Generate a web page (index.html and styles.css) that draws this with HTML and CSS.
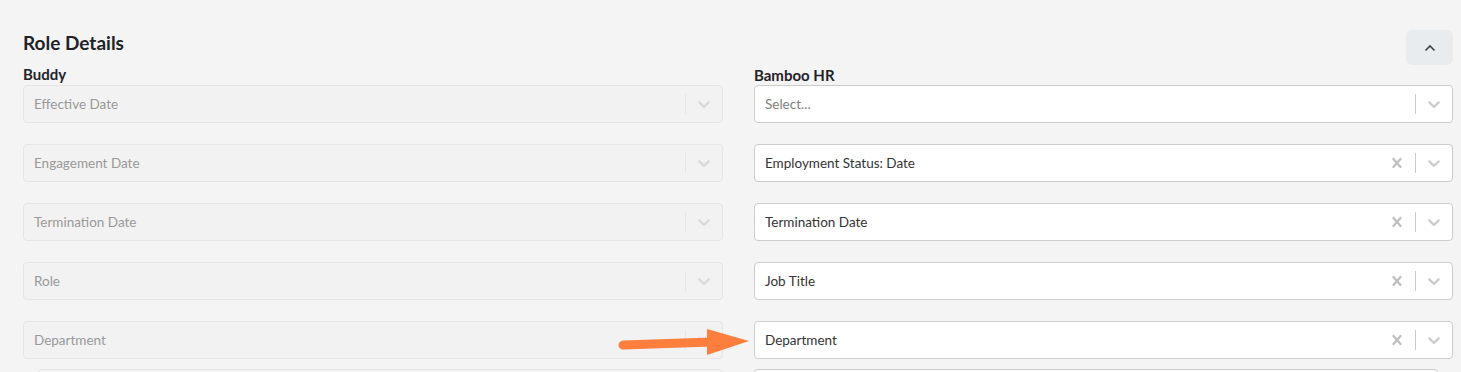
FILE: index.html
```html
<!DOCTYPE html>
<html lang="en">
<head>
  <meta charset="UTF-8">
  <title>Role Details</title>
  <meta name="viewport" content="width=device-width, initial-scale=1.0">
  <link rel="stylesheet" href="styles.css">
</head>
<body>
  <section class="panel">
    <div class="panel-head">
      <h2>Role Details</h2>
      <button class="collapse" aria-label="Collapse">
        <svg width="12" height="8" viewBox="0 0 12 8"><polyline points="1.5,6.5 6,2 10.5,6.5" fill="none" stroke="#3d4246" stroke-width="1.6"/></svg>
      </button>
    </div>

    <div class="grid">
      <div class="col-label">Buddy</div>
      <div class="col-label">Bamboo HR</div>

      <div class="select disabled"><span class="value">Effective Date</span><span class="sep"></span><span class="ind"><svg viewBox="0 0 20 20"><path d="M4.516 7.548c0.436-0.446 1.043-0.481 1.576 0l3.908 3.747 3.908-3.747c0.533-0.481 1.141-0.446 1.574 0 0.436 0.445 0.408 1.197 0 1.615-0.406 0.418-4.695 4.502-4.695 4.502-0.217 0.223-0.502 0.335-0.787 0.335s-0.57-0.112-0.789-0.335c0 0-4.287-4.084-4.695-4.502s-0.436-1.17 0-1.615z"/></svg></span></div>
      <div class="select"><span class="value placeholder">Select...</span><span class="sep"></span><span class="ind"><svg viewBox="0 0 20 20"><path d="M4.516 7.548c0.436-0.446 1.043-0.481 1.576 0l3.908 3.747 3.908-3.747c0.533-0.481 1.141-0.446 1.574 0 0.436 0.445 0.408 1.197 0 1.615-0.406 0.418-4.695 4.502-4.695 4.502-0.217 0.223-0.502 0.335-0.787 0.335s-0.57-0.112-0.789-0.335c0 0-4.287-4.084-4.695-4.502s-0.436-1.17 0-1.615z"/></svg></span></div>

      <div class="select disabled"><span class="value">Engagement Date</span><span class="sep"></span><span class="ind"><svg viewBox="0 0 20 20"><path d="M4.516 7.548c0.436-0.446 1.043-0.481 1.576 0l3.908 3.747 3.908-3.747c0.533-0.481 1.141-0.446 1.574 0 0.436 0.445 0.408 1.197 0 1.615-0.406 0.418-4.695 4.502-4.695 4.502-0.217 0.223-0.502 0.335-0.787 0.335s-0.57-0.112-0.789-0.335c0 0-4.287-4.084-4.695-4.502s-0.436-1.17 0-1.615z"/></svg></span></div>
      <div class="select"><span class="value">Employment Status: Date</span><span class="ind clear"><svg viewBox="0 0 20 20"><path d="M14.348 14.849c-0.469 0.469-1.229 0.469-1.697 0l-2.651-3.030-2.651 3.029c-0.469 0.469-1.229 0.469-1.697 0-0.469-0.469-0.469-1.229 0-1.697l2.758-3.15-2.759-3.152c-0.469-0.469-0.469-1.228 0-1.697s1.228-0.469 1.697 0l2.652 3.031 2.651-3.031c0.469-0.469 1.228-0.469 1.697 0s0.469 1.229 0 1.697l-2.758 3.152 2.758 3.15c0.469 0.469 0.469 1.229 0 1.698z"/></svg></span><span class="sep"></span><span class="ind"><svg viewBox="0 0 20 20"><path d="M4.516 7.548c0.436-0.446 1.043-0.481 1.576 0l3.908 3.747 3.908-3.747c0.533-0.481 1.141-0.446 1.574 0 0.436 0.445 0.408 1.197 0 1.615-0.406 0.418-4.695 4.502-4.695 4.502-0.217 0.223-0.502 0.335-0.787 0.335s-0.57-0.112-0.789-0.335c0 0-4.287-4.084-4.695-4.502s-0.436-1.17 0-1.615z"/></svg></span></div>

      <div class="select disabled"><span class="value">Termination Date</span><span class="sep"></span><span class="ind"><svg viewBox="0 0 20 20"><path d="M4.516 7.548c0.436-0.446 1.043-0.481 1.576 0l3.908 3.747 3.908-3.747c0.533-0.481 1.141-0.446 1.574 0 0.436 0.445 0.408 1.197 0 1.615-0.406 0.418-4.695 4.502-4.695 4.502-0.217 0.223-0.502 0.335-0.787 0.335s-0.57-0.112-0.789-0.335c0 0-4.287-4.084-4.695-4.502s-0.436-1.17 0-1.615z"/></svg></span></div>
      <div class="select"><span class="value">Termination Date</span><span class="ind clear"><svg viewBox="0 0 20 20"><path d="M14.348 14.849c-0.469 0.469-1.229 0.469-1.697 0l-2.651-3.030-2.651 3.029c-0.469 0.469-1.229 0.469-1.697 0-0.469-0.469-0.469-1.229 0-1.697l2.758-3.15-2.759-3.152c-0.469-0.469-0.469-1.228 0-1.697s1.228-0.469 1.697 0l2.652 3.031 2.651-3.031c0.469-0.469 1.228-0.469 1.697 0s0.469 1.229 0 1.697l-2.758 3.152 2.758 3.15c0.469 0.469 0.469 1.229 0 1.698z"/></svg></span><span class="sep"></span><span class="ind"><svg viewBox="0 0 20 20"><path d="M4.516 7.548c0.436-0.446 1.043-0.481 1.576 0l3.908 3.747 3.908-3.747c0.533-0.481 1.141-0.446 1.574 0 0.436 0.445 0.408 1.197 0 1.615-0.406 0.418-4.695 4.502-4.695 4.502-0.217 0.223-0.502 0.335-0.787 0.335s-0.57-0.112-0.789-0.335c0 0-4.287-4.084-4.695-4.502s-0.436-1.17 0-1.615z"/></svg></span></div>

      <div class="select disabled"><span class="value">Role</span><span class="sep"></span><span class="ind"><svg viewBox="0 0 20 20"><path d="M4.516 7.548c0.436-0.446 1.043-0.481 1.576 0l3.908 3.747 3.908-3.747c0.533-0.481 1.141-0.446 1.574 0 0.436 0.445 0.408 1.197 0 1.615-0.406 0.418-4.695 4.502-4.695 4.502-0.217 0.223-0.502 0.335-0.787 0.335s-0.57-0.112-0.789-0.335c0 0-4.287-4.084-4.695-4.502s-0.436-1.17 0-1.615z"/></svg></span></div>
      <div class="select"><span class="value">Job Title</span><span class="ind clear"><svg viewBox="0 0 20 20"><path d="M14.348 14.849c-0.469 0.469-1.229 0.469-1.697 0l-2.651-3.030-2.651 3.029c-0.469 0.469-1.229 0.469-1.697 0-0.469-0.469-0.469-1.229 0-1.697l2.758-3.15-2.759-3.152c-0.469-0.469-0.469-1.228 0-1.697s1.228-0.469 1.697 0l2.652 3.031 2.651-3.031c0.469-0.469 1.228-0.469 1.697 0s0.469 1.229 0 1.697l-2.758 3.152 2.758 3.15c0.469 0.469 0.469 1.229 0 1.698z"/></svg></span><span class="sep"></span><span class="ind"><svg viewBox="0 0 20 20"><path d="M4.516 7.548c0.436-0.446 1.043-0.481 1.576 0l3.908 3.747 3.908-3.747c0.533-0.481 1.141-0.446 1.574 0 0.436 0.445 0.408 1.197 0 1.615-0.406 0.418-4.695 4.502-4.695 4.502-0.217 0.223-0.502 0.335-0.787 0.335s-0.57-0.112-0.789-0.335c0 0-4.287-4.084-4.695-4.502s-0.436-1.17 0-1.615z"/></svg></span></div>

      <div class="select disabled"><span class="value">Department</span><span class="sep"></span><span class="ind"><svg viewBox="0 0 20 20"><path d="M4.516 7.548c0.436-0.446 1.043-0.481 1.576 0l3.908 3.747 3.908-3.747c0.533-0.481 1.141-0.446 1.574 0 0.436 0.445 0.408 1.197 0 1.615-0.406 0.418-4.695 4.502-4.695 4.502-0.217 0.223-0.502 0.335-0.787 0.335s-0.57-0.112-0.789-0.335c0 0-4.287-4.084-4.695-4.502s-0.436-1.17 0-1.615z"/></svg></span></div>
      <div class="select"><span class="value">Department</span><span class="ind clear"><svg viewBox="0 0 20 20"><path d="M14.348 14.849c-0.469 0.469-1.229 0.469-1.697 0l-2.651-3.030-2.651 3.029c-0.469 0.469-1.229 0.469-1.697 0-0.469-0.469-0.469-1.229 0-1.697l2.758-3.15-2.759-3.152c-0.469-0.469-0.469-1.228 0-1.697s1.228-0.469 1.697 0l2.652 3.031 2.651-3.031c0.469-0.469 1.228-0.469 1.697 0s0.469 1.229 0 1.697l-2.758 3.152 2.758 3.15c0.469 0.469 0.469 1.229 0 1.698z"/></svg></span><span class="sep"></span><span class="ind"><svg viewBox="0 0 20 20"><path d="M4.516 7.548c0.436-0.446 1.043-0.481 1.576 0l3.908 3.747 3.908-3.747c0.533-0.481 1.141-0.446 1.574 0 0.436 0.445 0.408 1.197 0 1.615-0.406 0.418-4.695 4.502-4.695 4.502-0.217 0.223-0.502 0.335-0.787 0.335s-0.57-0.112-0.789-0.335c0 0-4.287-4.084-4.695-4.502s-0.436-1.17 0-1.615z"/></svg></span></div>
    </div>

    <div class="grid grid-next">
      <div class="select disabled inset-left"></div>
      <div class="select inset-right"></div>
    </div>
  </section>

  <!-- annotation arrow drawn on top of the screenshot -->
  <svg class="arrow" width="1461" height="372" viewBox="0 0 1461 372">
    <line x1="623" y1="345" x2="712" y2="342" stroke="#fe7f3d" stroke-width="9" stroke-linecap="round"/>
    <polygon points="707,329 749,341 707,355" fill="#fe7f3d"/>
  </svg>
</body>
</html>
```

FILE: styles.css
```css
body { margin: 0; background: #f4f4f4; font-family: "Source Sans Pro", Lato, "Noto Sans", sans-serif; color: #212529; overflow: hidden; }
.panel { padding: 0 8px 0 23px; }
.panel-head { display: flex; justify-content: space-between; align-items: flex-start; padding-top: 30px; height: 34px; }
.panel-head h2 { margin: 0; font-size: 19px; line-height: 26px; font-weight: 700; color: #1f2328; }
.collapse { width: 47px; height: 35px; border: none; border-radius: 6px; background: #e9ecef; display: flex; align-items: center; justify-content: center; padding: 0; }

.grid { display: grid; grid-template-columns: 700px 699px; column-gap: 31px; row-gap: 21px; }
.col-label { font-size: 15px; font-weight: 700; line-height: 20px; margin-bottom: -21px; color: #1f2328; }
.col-label + .col-label { margin-top: 1px; }

.select { display: flex; align-items: center; height: 38px; box-sizing: border-box; background: #fff; border: 1px solid #cccccc; border-radius: 4px; font-size: 13.5px; color: #333; }
.select .value { flex: 1; padding-left: 10px; white-space: nowrap; }
.select .placeholder { color: #808080; }
.select .sep { width: 1px; align-self: stretch; margin: 8px 0; background: #cccccc; }
.select .ind { width: 36px; display: flex; align-items: center; justify-content: center; }
.select .ind svg { width: 20px; height: 20px; fill: #cccccc; }
.select .clear svg { fill: #c0c0c0; }
.select.disabled { background: #f2f2f2; border-color: #e6e6e6; color: #999; }
.select.disabled .sep { background: #e6e6e6; }
.select.disabled .ind svg { fill: #d9d9d9; }

.grid-next { margin-top: 10px; }
.inset-left { margin-left: 15px; }
.inset-right { margin-right: 15px; }

.arrow { position: absolute; left: 0; top: 0; pointer-events: none; }
```
